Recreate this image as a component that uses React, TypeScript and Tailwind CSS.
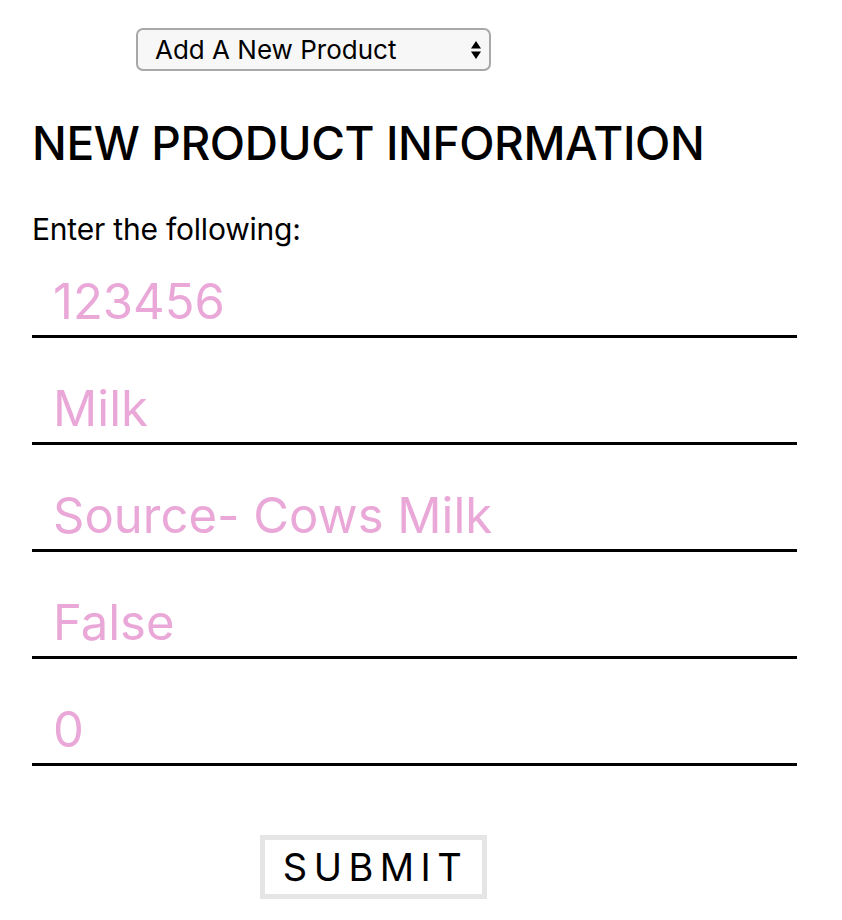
import React from 'react';

const fields = ['123456', 'Milk', 'Source- Cows Milk', 'False', '0'];

export default function App() {
  return (
    <div className="min-h-screen bg-white font-['Inter','Liberation_Sans',sans-serif] text-black">
      <div className="px-8 pt-7">
        <div className="ml-[104px] flex h-[43px] w-[355px] items-center justify-between rounded-[7px] border-2 border-[#a8a8a8] bg-[#f7f7f7] pl-[17px] pr-[7px]">
          <span className="text-[26px] leading-none">Add A New Product</span>
          <svg width="12" height="24" viewBox="0 0 12 24">
            <path d="M6 3 L11 10.5 L1 10.5 Z" fill="#000" />
            <path d="M6 21 L11 13.5 L1 13.5 Z" fill="#000" />
          </svg>
        </div>

        <h1 className="mt-[45px] text-[46px] font-medium leading-[1.2] tracking-[-0.4px]">NEW PRODUCT INFORMATION</h1>

        <p className="mt-[43px] text-[30px] leading-none tracking-[-0.2px]">Enter the following:</p>

        <form className="flex w-[765px] flex-col" onSubmit={(e) => e.preventDefault()}>
          {fields.map((f, i) => (
            <input
              key={f}
              placeholder={f}
              className={`h-[71px] w-full border-b-[3px] border-black bg-transparent pl-[21px] text-[49px] leading-none outline-none placeholder:text-[#eaa8d8] ${i === 0 ? 'mt-[23px]' : 'mt-[36px]'}`}
            />
          ))}
          <button
            type="submit"
            className="ml-[228px] mt-[69px] flex h-[64px] w-[227px] items-center justify-center border-[5px] border-[#e5e5e5] bg-white pl-[4px] text-[38px] leading-none tracking-[0.17em]"
          >
            SUBMIT
          </button>
        </form>
      </div>
    </div>
  );
}
